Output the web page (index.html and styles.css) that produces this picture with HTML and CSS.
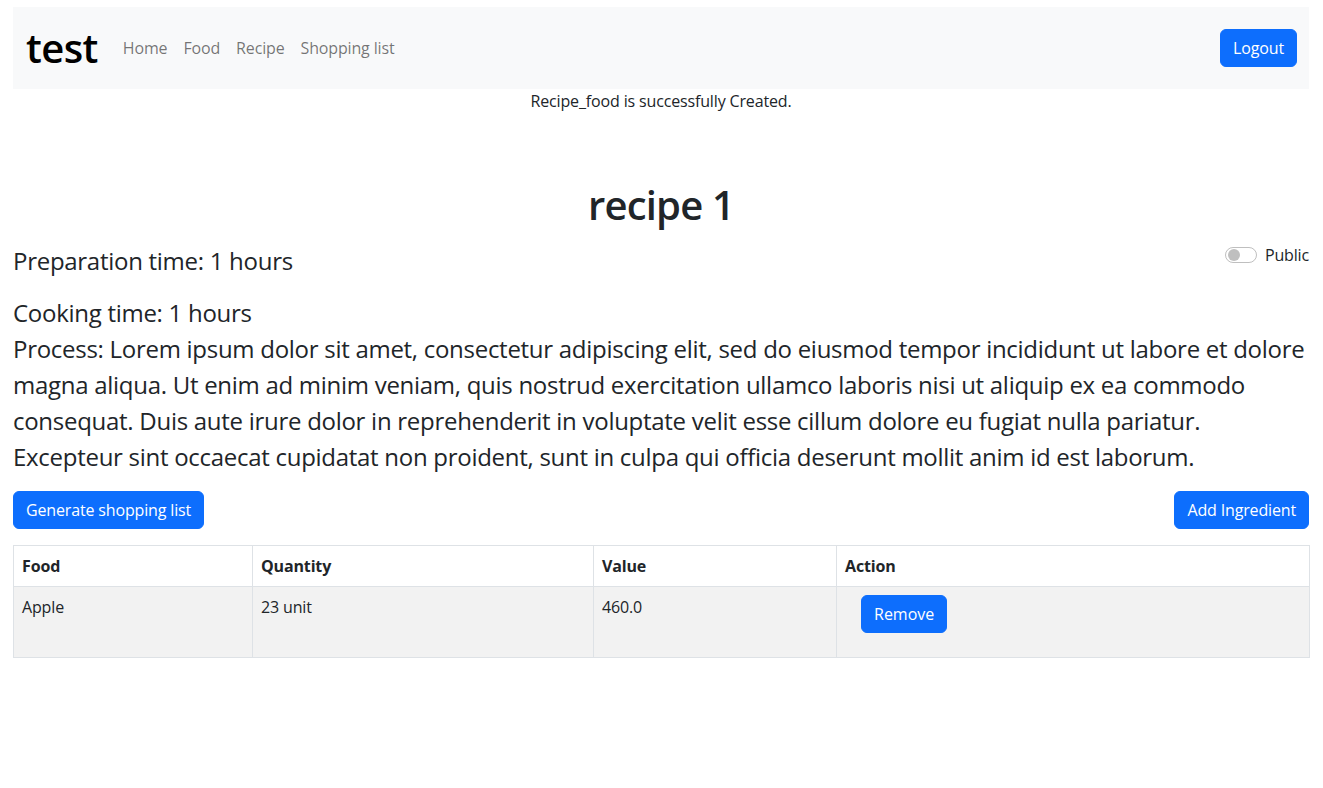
FILE: index.html
```html
<!DOCTYPE html>
<html lang="en">
<head>
<meta charset="utf-8">
<title>recipe 1</title>
<link rel="stylesheet" href="styles.css">
</head>
<body>
<div class="page">
  <nav class="navbar">
    <div class="nav-left">
      <a class="brand" href="#">test</a>
      <ul class="nav-links">
        <li><a href="#">Home</a></li>
        <li><a href="#">Food</a></li>
        <li><a href="#">Recipe</a></li>
        <li><a href="#">Shopping list</a></li>
      </ul>
    </div>
    <a class="btn" href="#">Logout</a>
  </nav>
  <p class="notice">Recipe_food is successfully Created.</p>
  <main>
    <h1 class="title">recipe 1</h1>
    <div class="meta-row">
      <p class="lead-text">Preparation time: 1 hours</p>
      <label class="switch">
        <span class="switch-track"><span class="switch-knob"></span></span>
        <span class="switch-label">Public</span>
      </label>
    </div>
    <p class="lead-text flush">Cooking time: 1 hours</p>
    <p class="lead-text">Process: Lorem ipsum dolor sit amet, consectetur adipiscing elit, sed do eiusmod tempor incididunt ut labore et dolore magna aliqua. Ut enim ad minim veniam, quis nostrud exercitation ullamco laboris nisi ut aliquip ex ea commodo consequat. Duis aute irure dolor in reprehenderit in voluptate velit esse cillum dolore eu fugiat nulla pariatur. Excepteur sint occaecat cupidatat non proident, sunt in culpa qui officia deserunt mollit anim id est laborum.</p>
    <div class="actions">
      <a class="btn" href="#">Generate shopping list</a>
      <a class="btn" href="#">Add Ingredient</a>
    </div>
    <table class="ingredients">
      <colgroup>
        <col class="col-food">
        <col class="col-qty">
        <col class="col-value">
        <col class="col-action">
      </colgroup>
      <thead>
        <tr><th>Food</th><th>Quantity</th><th>Value</th><th>Action</th></tr>
      </thead>
      <tbody>
        <tr>
          <td>Apple</td>
          <td>23 unit</td>
          <td>460.0</td>
          <td><form class="remove-form"><button class="btn" type="button">Remove</button></form></td>
        </tr>
      </tbody>
    </table>
  </main>
</div>
</body>
</html>
```
FILE: styles.css
```css
* { box-sizing: border-box; }
html, body { margin: 0; padding: 0; background: #fff; }
body {
  font-family: "Open Sans", "Noto Sans", sans-serif;
  font-size: 16px;
  line-height: 1.5;
  color: #212529;
  letter-spacing: -0.15px;
}
.page { padding: 7px 14px 0 13px; }

.navbar {
  display: flex;
  align-items: center;
  justify-content: space-between;
  background: #f8f9fa;
  height: 82px;
  padding: 0 12px;
}
.nav-left { display: flex; align-items: center; }
.brand {
  font-size: 40px;
  font-weight: 600;
  line-height: 48px;
  letter-spacing: -0.6px;
  color: #000;
  text-decoration: none;
  margin-right: 17px;
  padding-left: 1px;
}
.nav-links { display: flex; list-style: none; margin: 0; padding: 0; }
.nav-links a {
  display: block;
  padding: 8px;
  color: rgba(0,0,0,.55);
  text-decoration: none;
}

.btn {
  display: inline-block;
  background: #0d6efd;
  color: #fff;
  border: 1px solid #0d6efd;
  border-radius: 6px;
  padding: 6px 12px;
  font: inherit;
  line-height: 24px;
  text-decoration: none;
  cursor: pointer;
}

.notice { margin: 0; text-align: center; line-height: 24px; }

.title {
  margin: 68px 0 14px;
  text-align: center;
  font-size: 40px;
  font-weight: 600;
  line-height: 48px;
  letter-spacing: -0.8px;
}
.meta-row { display: flex; justify-content: space-between; align-items: flex-start; }
.lead-text { font-size: 24px; line-height: 36px; margin: 0 0 16px; letter-spacing: -0.28px; }
.lead-text.flush { margin-bottom: 0; }

.switch { display: flex; align-items: center; height: 24px; cursor: pointer; }
.switch-track {
  width: 32px;
  height: 16px;
  border: 1px solid rgba(0,0,0,.25);
  border-radius: 16px;
  display: flex;
  align-items: center;
  padding-left: 2px;
  margin-right: 8px;
}
.switch-knob { width: 12px; height: 12px; border-radius: 50%; background: #bfbfbf; }

.actions { display: flex; justify-content: space-between; margin-bottom: 16px; }

.ingredients {
  width: 100%;
  table-layout: fixed;
  border-collapse: collapse;
}
.col-food { width: 239px; }
.col-qty { width: 341px; }
.col-value { width: 243px; }
.col-action { width: 473px; }
.ingredients th, .ingredients td {
  border: 1px solid #dee2e6;
  padding: 8px;
  text-align: left;
  vertical-align: top;
  line-height: 24px;
}
.ingredients th { font-weight: 700; background: #fff; }
.ingredients tbody tr { background: #f2f2f2; }
.remove-form { margin: 0 0 16px 16px; }
```
